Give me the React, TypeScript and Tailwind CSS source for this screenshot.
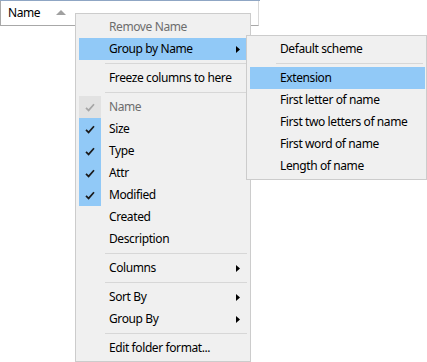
import React from "react";

type Item =
  | { kind: "sep" }
  | {
      kind?: "item";
      label: string;
      disabled?: boolean;
      active?: boolean;
      check?: "on" | "off";
      sub?: boolean;
    };

const mainItems: Item[] = [
  { label: "Remove Name", disabled: true },
  { label: "Group by Name", active: true, sub: true },
  { kind: "sep" },
  { label: "Freeze columns to here" },
  { kind: "sep" },
  { label: "Name", disabled: true, check: "off" },
  { label: "Size", check: "on" },
  { label: "Type", check: "on" },
  { label: "Attr", check: "on" },
  { label: "Modified", check: "on" },
  { label: "Created" },
  { label: "Description" },
  { kind: "sep" },
  { label: "Columns", sub: true },
  { kind: "sep" },
  { label: "Sort By", sub: true },
  { label: "Group By", sub: true },
  { kind: "sep" },
  { label: "Edit folder format..." },
];

const subItems: Item[] = [
  { label: "Default scheme" },
  { kind: "sep" },
  { label: "Extension", active: true },
  { label: "First letter of name" },
  { label: "First two letters of name" },
  { label: "First word of name" },
  { label: "Length of name" },
];

function Check({ color }: { color: string }) {
  return (
    <svg width="10" height="9" viewBox="0 0 10 9">
      <path
        d="M1 4.8 L3.6 7.4 L9 1.2"
        fill="none"
        stroke={color}
        strokeWidth="1.7"
      />
    </svg>
  );
}

function Arrow() {
  return (
    <svg width="4" height="7" viewBox="0 0 4 7" className="absolute right-[9px] top-[8px]">
      <path d="M0 0 L4 3.5 L0 7 Z" fill="#000" />
    </svg>
  );
}

function Menu({ items }: { items: Item[] }) {
  return (
    <div className="flex flex-col py-[2px] pl-[2px] pr-[1px]">
      {items.map((it, i) => {
        if (it.kind === "sep")
          return (
            <div key={i} className="h-[7px] flex items-center pl-[27px] pr-[2px]">
              <div className="h-px w-full bg-[#d7d7d7]" />
            </div>
          );
        return (
          <div
            key={i}
            className={`relative h-[22px] flex items-center ml-px ${
              it.active ? "bg-[#91c9f7]" : ""
            }`}
          >
            <div
              className={`w-[22px] h-[22px] flex items-center justify-center ${
                it.check === "on"
                  ? "bg-[#91c9f7]"
                  : it.check === "off"
                  ? "bg-[#e2e2e2]"
                  : ""
              }`}
            >
              {it.check === "on" && <Check color="#1b1b1b" />}
              {it.check === "off" && <Check color="#a6a6a6" />}
            </div>
            <span
              className={`ml-[8px] whitespace-nowrap ${
                it.disabled ? "text-[#6d6d6d]" : "text-black"
              }`}
            >
              {it.label}
            </span>
            {it.sub && <Arrow />}
          </div>
        );
      })}
    </div>
  );
}

export default function App() {
  return (
    <div
      className="relative w-[427px] h-[362px] bg-white text-[12px] tracking-[-0.4px] overflow-hidden"
      style={{ fontFamily: '"Noto Sans", "Open Sans", sans-serif' }}
    >
      <div className="w-[260px] border-t border-[#8fa6c4]">
        <div className="w-[259px] h-[25px] border-l border-b border-r border-[#a8a8a8] border-r-[#d9d9d9] flex items-center">
          <span className="ml-[7px] text-black">Name</span>
          <svg width="10" height="5" viewBox="0 0 10 5" className="ml-[16px] mt-[-2px]">
            <path d="M0 5 L5 0 L10 5 Z" fill="#a0a0a0" />
          </svg>
        </div>
      </div>

      <div className="absolute left-[75px] top-[13px] w-[176px] bg-[#f0f0f0] border border-[#cccccc]">
        <Menu items={mainItems} />
      </div>

      <div className="absolute left-[246px] top-[35px] w-[181px] bg-[#f0f0f0] border border-[#cccccc]">
        <Menu items={subItems} />
      </div>
    </div>
  );
}
